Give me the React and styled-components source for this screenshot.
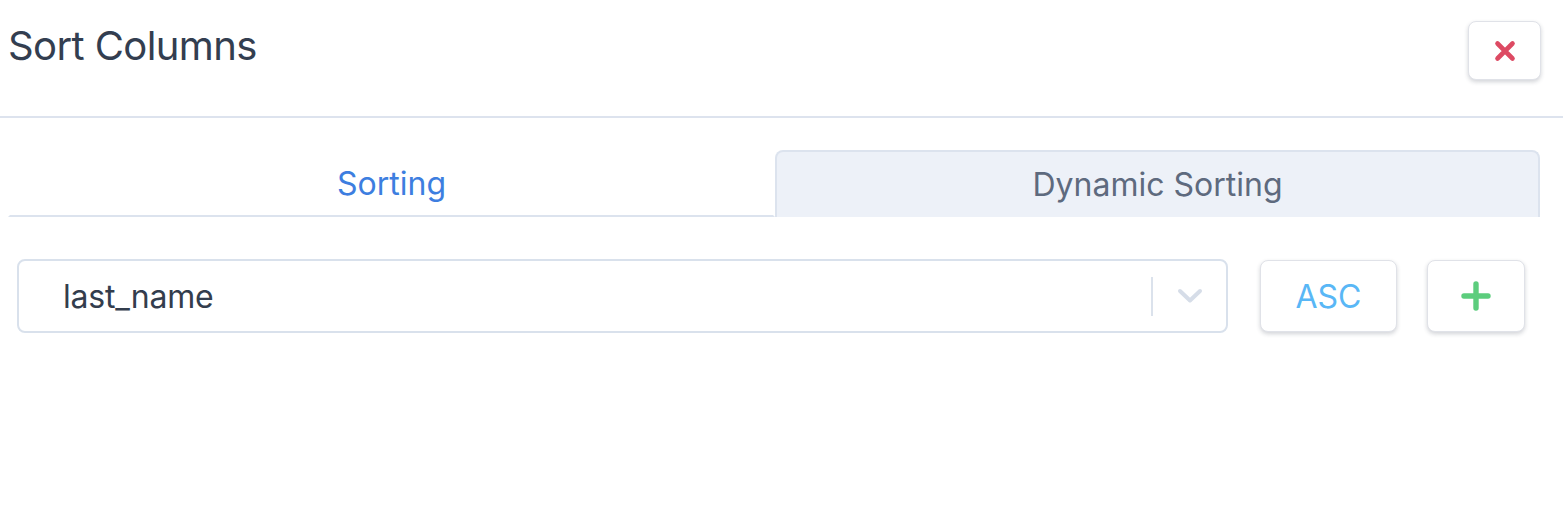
import React from "react";
import styled, { createGlobalStyle } from "styled-components";

const Global = createGlobalStyle`
  html, body { margin: 0; padding: 0; background: #ffffff; }
  body { font-family: Inter, "Noto Sans", sans-serif; }
  * { box-sizing: border-box; }
`;

const Page = styled.div`
  width: 1563px;
  min-height: 505px;
  background: #fff;
`;

const Header = styled.div`
  display: flex;
  justify-content: space-between;
  align-items: flex-start;
  padding: 21px 22px 36px 8px;
  border-bottom: 2px solid #dde3ee;
`;

const Title = styled.h1`
  margin: 0;
  font-size: 40px;
  font-weight: 400;
  letter-spacing: -0.6px;
  line-height: normal;
  color: #333e50;
`;

const IconButton = styled.button`
  display: flex;
  align-items: center;
  justify-content: center;
  width: ${(p) => p.$w}px;
  height: ${(p) => p.$h}px;
  padding: 0;
  background: #fff;
  border: 1px solid #e0e2e8;
  border-radius: 8px;
  box-shadow: 0 2px 4px rgba(30, 40, 60, 0.2);
  font-family: Inter, sans-serif;
  font-size: 32px;
  color: ${(p) => p.$color || "#333"};
  cursor: pointer;
`;

const Body = styled.div`
  padding: 32px 23px 0 8px;
`;

const TabBar = styled.div`
  display: grid;
  grid-template-columns: 767px 1fr;
`;

const Tab = styled.div`
  display: flex;
  align-items: center;
  justify-content: center;
  height: 67px;
  font-size: 32px;
  color: ${(p) => (p.$active ? "#3d7ee0" : "#5e6a7e")};
  background: ${(p) => (p.$active ? "#fff" : "#edf1f8")};
  border: 2px solid ${(p) => (p.$active ? "transparent" : "#dce3ee")};
  border-bottom: ${(p) => (p.$active ? "2px solid #dce3ee" : "none")};
  border-radius: ${(p) => (p.$active ? "0" : "8px 8px 0 0")};
`;

const Row = styled.div`
  display: flex;
  align-items: center;
  padding: 42px 15px 0 9px;
`;

const Select = styled.div`
  flex: 1;
  display: flex;
  align-items: center;
  height: 74px;
  border: 2px solid #d9e1ec;
  border-radius: 8px;
  padding-left: 44px;
  margin-right: 32px;
`;

const Value = styled.div`
  flex: 1;
  font-size: 32px;
  letter-spacing: -0.2px;
  color: #333d4d;
`;

const Separator = styled.span`
  width: 2px;
  height: 39px;
  background: #dbe2ec;
`;

const Chevron = styled.div`
  display: flex;
  align-items: center;
  justify-content: center;
  width: 73px;
  height: 100%;
`;

const Gap = styled.div`
  width: ${(p) => p.$w}px;
`;

export default function App() {
  return (
    <Page>
      <Global />
      <Header>
        <Title>Sort Columns</Title>
        <IconButton $w={73} $h={59} aria-label="Close">
          <svg width="22" height="22" viewBox="0 0 22 22">
            <path
              d="M3.5 3.5 L18.5 18.5 M18.5 3.5 L3.5 18.5"
              stroke="#dd4a63"
              strokeWidth="4.6"
              strokeLinecap="round"
              fill="none"
            />
          </svg>
        </IconButton>
      </Header>
      <Body>
        <TabBar>
          <Tab $active>Sorting</Tab>
          <Tab>Dynamic Sorting</Tab>
        </TabBar>
        <Row>
          <Select>
            <Value>last_name</Value>
            <Separator />
            <Chevron>
              <svg width="26" height="16" viewBox="0 0 26 16">
                <path
                  d="M3 3 L13 12.5 L23 3"
                  stroke="#d6dde8"
                  strokeWidth="4"
                  strokeLinecap="round"
                  strokeLinejoin="round"
                  fill="none"
                />
              </svg>
            </Chevron>
          </Select>
          <IconButton $w={137} $h={72} $color="#59b7f6">
            ASC
          </IconButton>
          <Gap $w={30} />
          <IconButton $w={98} $h={72} aria-label="Add">
            <svg width="30" height="30" viewBox="0 0 30 30">
              <path
                d="M15 3 V27 M3 15 H27"
                stroke="#5ccd7d"
                strokeWidth="5.4"
                strokeLinecap="round"
                fill="none"
              />
            </svg>
          </IconButton>
        </Row>
      </Body>
    </Page>
  );
}
